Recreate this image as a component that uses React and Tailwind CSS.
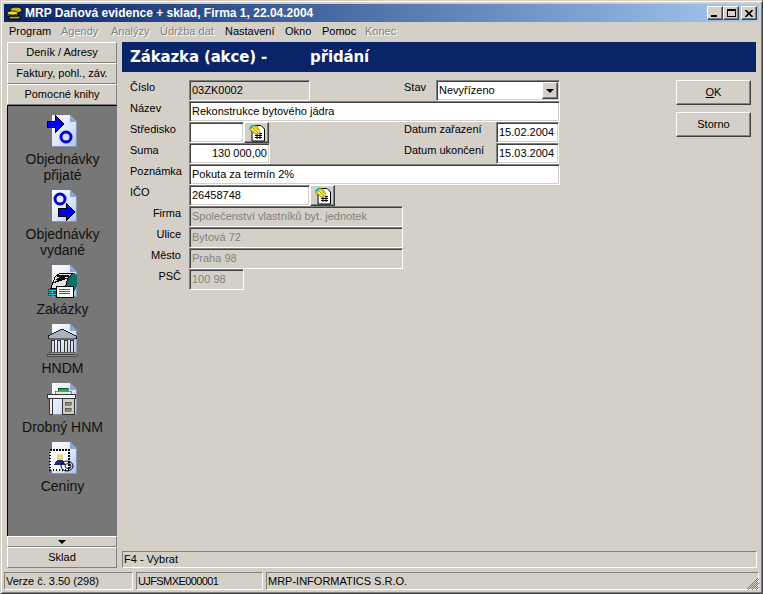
const sunken = 'border border-t-[#808080] border-l-[#808080] border-b-white border-r-white shadow-[inset_1px_1px_0_#404040,inset_-1px_-1px_0_#d4d0c8]';
const raised = 'border border-t-white border-l-white border-b-[#404040] border-r-[#404040] shadow-[inset_-1px_-1px_0_#808080]';
const etched = 'border border-t-[#808080] border-l-[#808080] border-b-white border-r-white flex items-center pl-[1px] whitespace-nowrap';
const tabBtn = 'border border-t-white border-l-white border-b-[#808080] border-r-[#808080] flex items-center justify-center bg-[#d4d0c8]';

function Page({ children }) {
  return (
    <svg width="32" height="34" viewBox="0 0 32 34" shapeRendering="crispEdges">
      <defs>
        <linearGradient id="pg" x1="0" y1="0" x2="1" y2="1">
          <stop offset="0" stopColor="#ffffff" />
          <stop offset="0.55" stopColor="#dbe6fa" />
          <stop offset="1" stopColor="#a9c0ee" />
        </linearGradient>
      </defs>
      <path d="M5 1h18l7 7v25H5z" fill="url(#pg)" />
      <path d="M23 1l7 7h-7z" fill="#8fa3cf" />
      <path d="M30 8v25H5v-1h24V8z" fill="#8a94ad" />
      {children}
    </svg>
  );
}

const ArrowIn = () => (
  <Page>
    <path d="M0 7h8V1l9 9-9 9v-6H0z" fill="#0000ff" stroke="#000" strokeWidth="1" />
    <ellipse cx="19" cy="23" rx="5" ry="5" fill="none" stroke="#0000e0" strokeWidth="3" shapeRendering="auto" />
  </Page>
);

const ArrowOut = () => (
  <Page>
    <ellipse cx="13" cy="10" rx="5" ry="5" fill="none" stroke="#0000e0" strokeWidth="3" shapeRendering="auto" />
    <path d="M11 19h8v-5l9 9-9 9v-5h-8z" fill="#0000ff" stroke="#000" strokeWidth="1" />
  </Page>
);

const Cards = () => (
  <Page>
    <path d="M4 24l5-12 4-3h14l3 3v10l-6 11H8z" fill="#0f6e6e" />
    <path d="M4 24l4-11 5-4h13l-5 5-3 10z" fill="#e4e4e4" stroke="#000" strokeWidth="1" />
    <path d="M7 19l5-5h10M9 16l4-4h11M10 13l3-2h11" stroke="#222" strokeWidth="1" strokeDasharray="1 1" />
    <path d="M9 22h17v11H9z" fill="#fff" stroke="#000" strokeWidth="1" />
    <path d="M12 25h11M12 27h11M12 29h11" stroke="#555" strokeWidth="1" />
    <path d="M1 25h8v2H1zM1 29h8v2H1z" fill="#10d0e0" stroke="#000" strokeWidth="0.5" />
  </Page>
);

const Temple = () => (
  <Page>
    <path d="M1 13l14-7 14 7v2H1z" fill="#aab2bb" stroke="#222" strokeWidth="1" />
    <path d="M2 15h26v2H2z" fill="#5f6770" />
    <path d="M4 17h3v12H4zM10 17h3v12h-3zM17 17h3v12h-3zM23 17h3v12h-3z" fill="#dde1e6" stroke="#333" strokeWidth="1" />
    <path d="M2 29h26v2H2zM0 31h30v2H0z" fill="#8a929b" stroke="#222" strokeWidth="0.5" />
  </Page>
);

const Desk = () => (
  <Page>
    <path d="M11 6h10v3H11z" fill="#12b04a" stroke="#000" strokeWidth="0.5" />
    <path d="M8 9h16v3H8z" fill="#e6e6e6" stroke="#222" strokeWidth="0.5" />
    <path d="M0 12h28v4H0z" fill="#f2f2f2" stroke="#333" strokeWidth="1" />
    <path d="M2 16h3v16H2z" fill="#eee" stroke="#333" strokeWidth="1" />
    <path d="M15 16h12v16H15z" fill="#cfcfc4" stroke="#333" strokeWidth="1" />
    <path d="M18 20h6v3h-6zM18 26h6v3h-6z" fill="#8c8c6e" stroke="#333" strokeWidth="0.5" />
  </Page>
);

const Stamp = () => (
  <Page>
    <path d="M3 9h19v20H3z" fill="#fff" stroke="#000" strokeWidth="1.5" strokeDasharray="1.5 1.5" />
    <path d="M10 13h6v6h-6z" fill="#e8d890" />
    <path d="M7 24l3-5h6l3 5z" fill="#1c2a80" />
    <ellipse cx="20" cy="25" rx="6" ry="5" fill="none" stroke="#000" strokeWidth="1" shapeRendering="auto" />
    <ellipse cx="21" cy="25" rx="3" ry="2.5" fill="none" stroke="#223" strokeWidth="1" shapeRendering="auto" />
  </Page>
);

const PickIcon = () => (
  <svg width="18" height="18" viewBox="0 0 18 18">
    <path d="M4 1.5h9l3.5 3.5v12H4z" fill="#fff" stroke="#000" strokeWidth="1" />
    <path d="M7 9.5h7M7 11.5h7M7 13.5h7M9 9v6M12 9v6" stroke="#000" strokeWidth="1" />
    <path d="M1 5l3-4 5 1 3 5-1 3-4 0z" fill="#f5e642" stroke="#6a6a10" strokeWidth="0.5" />
    <path d="M3 2l7 7M1.5 5l6 5M6 1.5l5 5" stroke="#9a9a20" strokeWidth="1" />
    <path d="M1 4l3-3h3L3 5z" fill="#18b8c8" />
  </svg>
);

const PickButton = () => (
  <div className={`${raised} w-[25px] h-[21px] bg-[#d4d0c8] flex items-center justify-center`}>
    <PickIcon />
  </div>
);

function Field({ width, value, white, disabled, right }) {
  return (
    <div
      className={`${sunken} h-[21px] shrink-0 flex items-center px-[2px] pb-[1px] overflow-hidden whitespace-nowrap ${white ? 'bg-white' : 'bg-[#d4d0c8]'} ${disabled ? 'text-[#808080]' : 'text-black'} ${right ? 'justify-end' : ''}`}
      style={{ width }}
    >
      {value}
    </div>
  );
}

function Row({ label, indent, children }) {
  return (
    <div className="flex h-[21px]">
      <div className={`w-[67px] shrink-0 pl-[8px] pr-[8px] pt-[1px] ${indent ? 'text-right' : ''}`}>{label}</div>
      {children}
    </div>
  );
}

function SideItem({ icon, lines }) {
  return (
    <div className="flex flex-col items-center">
      <div className="h-[34px]">{icon}</div>
      <div className="mt-[3px] text-[14px] leading-[16px] text-[#111] text-center">
        {lines.map((l) => <div key={l}>{l}</div>)}
      </div>
    </div>
  );
}

const menu = [
  ['Program', 9, false],
  ['Agendy', 61, true],
  ['Analýzy', 111, true],
  ['Údržba dat', 160, true],
  ['Nastavení', 225, false],
  ['Okno', 285, false],
  ['Pomoc', 322, false],
  ['Konec', 365, true],
];

export default function App() {
  return (
    <div className="w-[763px] h-[594px] bg-[#d4d0c8] border border-t-[#d4d0c8] border-l-[#d4d0c8] border-b-[#404040] border-r-[#404040] shadow-[inset_1px_1px_0_#fff,inset_-1px_-1px_0_#808080] p-[3px] flex flex-col overflow-hidden text-[11px] leading-[13px] text-black font-['Liberation_Sans',sans-serif]">
      {/* Title bar */}
      <div className="h-[18px] shrink-0 flex items-center bg-gradient-to-r from-[#0a246a] to-[#a6caf0] pl-[2px] pr-[2px]">
        <svg width="17" height="16" viewBox="0 0 17 16">
          <ellipse cx="10" cy="5" rx="6" ry="3" fill="#c8b818" stroke="#000" strokeWidth="1" />
          <path d="M1 8h11v3H1zM3 11h11v3H3z" fill="#b8a810" stroke="#000" strokeWidth="1" />
          <ellipse cx="6.5" cy="8" rx="5.5" ry="2" fill="#e8e040" stroke="#000" strokeWidth="0.8" />
        </svg>
        <span className="ml-[2px] text-white font-bold text-[12px] whitespace-pre">MRP Daňová evidence + sklad, Firma 1, 22.04.2004</span>
        <div className="ml-auto flex items-center">
          <div className={`${raised} w-[16px] h-[14px] bg-[#d4d0c8] relative`}>
            <div className="absolute left-[3px] bottom-[2px] w-[6px] h-[2px] bg-black" />
          </div>
          <div className={`${raised} w-[16px] h-[14px] bg-[#d4d0c8] flex items-center justify-center`}>
            <div className="w-[9px] h-[8px] border border-black border-t-2" />
          </div>
          <div className={`${raised} ml-[2px] w-[16px] h-[14px] bg-[#d4d0c8] flex items-center justify-center`}>
            <svg width="8" height="7" viewBox="0 0 8 7"><path d="M0.5 0L7.5 7M7.5 0L0.5 7" stroke="#000" strokeWidth="1.6" /></svg>
          </div>
        </div>
      </div>

      {/* Menu */}
      <div className="h-[18px] shrink-0 flex items-center">
        {menu.map(([name, x, off], i) => {
          const next = menu[i + 1] ? menu[i + 1][1] : x + 40;
          return (
            <span
              key={name}
              className={`whitespace-nowrap ${off ? 'text-[#808080] [text-shadow:1px_1px_0_#fff]' : ''} ${i === 0 ? 'ml-[5px]' : ''}`}
              style={{ width: next - x }}
            >
              {name}
            </span>
          );
        })}
      </div>

      {/* Body */}
      <div className="flex-1 min-h-0 flex pt-[2px]">
        {/* Sidebar */}
        <div className="w-[110px] shrink-0 ml-[3px] flex flex-col">
          <div className={`${tabBtn} h-[21px]`}>Deník / Adresy</div>
          <div className={`${tabBtn} h-[21px]`}>Faktury, pohl., záv.</div>
          <div className={`${tabBtn} h-[21px]`}>Pomocné knihy</div>
          <div className="flex-1 min-h-0 bg-[#777777] border-l border-t border-black pt-[8px] flex flex-col items-center">
            <SideItem icon={<ArrowIn />} lines={['Objednávky', 'přijaté']} />
            <div className="h-[6px]" />
            <SideItem icon={<ArrowOut />} lines={['Objednávky', 'vydané']} />
            <div className="h-[6px]" />
            <SideItem icon={<Cards />} lines={['Zakázky']} />
            <div className="h-[6px]" />
            <SideItem icon={<Temple />} lines={['HNDM']} />
            <div className="h-[6px]" />
            <SideItem icon={<Desk />} lines={['Drobný HNM']} />
            <div className="h-[6px]" />
            <SideItem icon={<Stamp />} lines={['Ceniny']} />
          </div>
          <div className={`${tabBtn} h-[11px] border-l-black`}>
            <div className="w-0 h-0 border-x-[4px] border-x-transparent border-t-[4px] border-t-black" />
          </div>
          <div className={`${tabBtn} h-[21px]`}>Sklad</div>
          <div className="h-[4px]" />
        </div>

        {/* Main */}
        <div className="flex-1 min-w-0 ml-[5px] mr-[2px] flex flex-col">
          <div className="h-[30px] shrink-0 mr-[1px] bg-[#0a246a] flex items-center pl-[8px] text-white font-bold text-[15px] whitespace-pre font-['DejaVu_Sans',sans-serif] tracking-[-0.15px]">
            <span>Zákazka (akce) -</span>
            <span className="ml-[43px]">přidání</span>
          </div>

          <div className="flex-1 min-h-0 flex pt-[8px]">
            {/* Form */}
            <div className="w-[554px] shrink-0 flex flex-col">
              <Row label="Číslo">
                <Field width={121} value="03ZK0002" />
                <div className="w-[94px] shrink-0 pl-[94px] pt-[1px] whitespace-nowrap">Stav</div>
                <div className={`${sunken} ml-[32px] w-[124px] h-[21px] bg-white relative flex items-center px-[2px] pb-[1px]`}>
                  Nevyřízeno
                  <div className={`${raised} absolute right-[1px] top-[1px] w-[16px] h-[17px] bg-[#d4d0c8] flex items-center justify-center`}>
                    <div className="w-0 h-0 border-x-[4px] border-x-transparent border-t-[4px] border-t-black" />
                  </div>
                </div>
              </Row>
              <Row label="Název"><Field width={371} value="Rekonstrukce bytového jádra" white /></Row>
              <Row label="Středisko">
                <Field width={55} value="" white />
                <PickButton />
                <div className="w-[135px] shrink-0 pl-[135px] pt-[1px] whitespace-nowrap">Datum zařazení</div>
                <div className="ml-[92px]"><Field width={63} value="15.02.2004" white /></div>
              </Row>
              <Row label="Suma">
                <Field width={81} value="130 000,00" white right />
                <div className="w-[134px] shrink-0 pl-[134px] pt-[1px] whitespace-nowrap">Datum ukončení</div>
                <div className="ml-[92px]"><Field width={63} value="15.03.2004" white /></div>
              </Row>
              <Row label="Poznámka"><Field width={371} value="Pokuta za termín 2%" white /></Row>
              <Row label="IČO">
                <Field width={121} value="26458748" white />
                <PickButton />
              </Row>
              <Row label="Firma" indent><Field width={214} value="Společenství vlastníků byt. jednotek" disabled /></Row>
              <Row label="Ulice" indent><Field width={214} value="Bytová 72" disabled /></Row>
              <Row label="Město" indent><Field width={214} value="Praha 98" disabled /></Row>
              <Row label="PSČ" indent><Field width={55} value="100 98" disabled /></Row>
            </div>

            {/* Buttons */}
            <div className="ml-auto mr-[6px] flex flex-col gap-[7px]">
              <button className={`${raised} w-[75px] h-[25px] bg-[#d4d0c8]`}><span className="underline">O</span>K</button>
              <button className={`${raised} w-[75px] h-[25px] bg-[#d4d0c8]`}>Storno</button>
            </div>
          </div>

          <div className={`${etched} h-[17px] shrink-0 mb-[4px]`}>F4 - Vybrat</div>
        </div>
      </div>

      {/* Status bar */}
      <div className="h-[18px] shrink-0 flex gap-[3px] relative">
        <div className={`${etched} w-[129px]`}>Verze č. 3.50 (298)</div>
        <div className={`${etched} w-[127px] tracking-[-0.6px]`}>UJFSMXE000001</div>
        <div className={`${etched} flex-1`}>MRP-INFORMATICS S.R.O.</div>
        <svg className="absolute right-0 bottom-0" width="13" height="13" viewBox="0 0 13 13">
          <path d="M12 1L1 12M13 2L2 13M12 5L5 12M13 6L6 13M12 9L9 12M13 10L10 13" stroke="#808080" strokeWidth="1" />
        </svg>
      </div>
    </div>
  );
}
